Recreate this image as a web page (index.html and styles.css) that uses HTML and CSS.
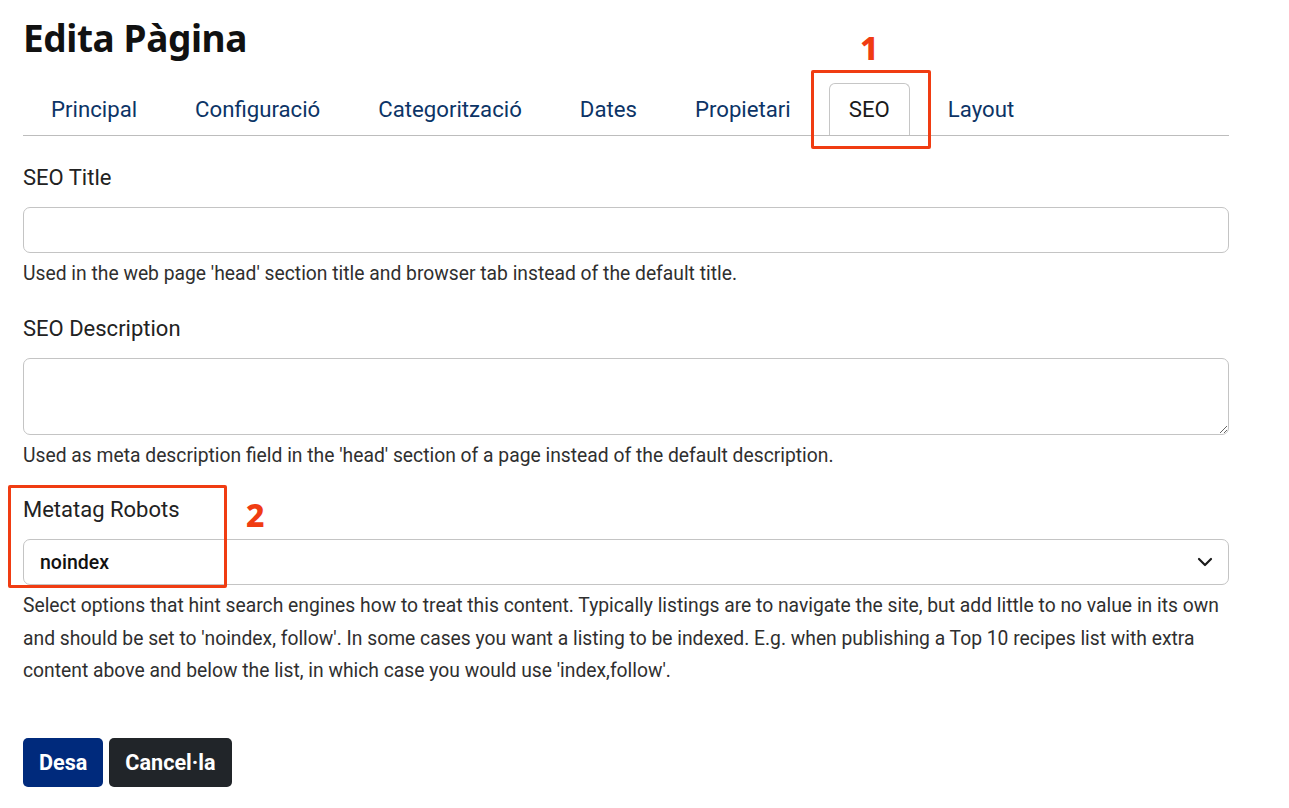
FILE: index.html
```html
<!DOCTYPE html>
<html lang="ca">

<head>
    <meta charset="UTF-8">
    <meta name="viewport" content="width=device-width, initial-scale=1.0">
    <title>Edita Pàgina</title>

    <link rel="stylesheet" href="styles.css">
</head>

<body>
    <div class="main">
        <h1 class="title">Edita Pàgina</h1>

        <ul class="tabs">
            <li class="tab">Principal</li>
            <li class="tab">Configuració</li>
            <li class="tab">Categorització</li>
            <li class="tab">Dates</li>
            <li class="tab">Propietari</li>
            <li class="tab active">SEO</li>
            <li class="tab">Layout</li>
        </ul>

        <form class="form">
            <div class="field">
                <label class="label" for="seotitle">SEO Title</label>
                <input class="input" type="text" id="seotitle">
                <div class="help">Used in the web page 'head' section title and browser tab instead of the default title.</div>
            </div>

            <div class="field">
                <label class="label" for="seodesc">SEO Description</label>
                <textarea class="input area" id="seodesc"></textarea>
                <div class="help">Used as meta description field in the 'head' section of a page instead of the default description.</div>
            </div>

            <div class="field">
                <label class="label" for="robots">Metatag Robots</label>
                <div class="select">
                    <span>noindex</span>
                    <svg class="chevron" width="16" height="16" viewBox="0 0 16 16">
                        <path d="M2 5l6 6 6-6" fill="none" stroke="#1b1b1b" stroke-width="2.2" stroke-linecap="round" stroke-linejoin="round" />
                    </svg>
                </div>
                <div class="help">Select options that hint search engines how to treat this content. Typically listings are to navigate the site, but add little to no value in its own and should be set to 'noindex, follow'. In some cases you want a listing to be indexed. E.g. when publishing a Top 10 recipes list with extra content above and below the list, in which case you would use 'index,follow'.</div>
            </div>

            <div class="buttons">
                <button class="btn save" type="button">Desa</button>
                <button class="btn cancel" type="button">Cancel·la</button>
            </div>
        </form>

        <!-- annotations -->
        <div class="mark mark1"></div>
        <span class="num num1">1</span>
        <div class="mark mark2"></div>
        <span class="num num2">2</span>
    </div>
</body>

</html>
```

FILE: styles.css
```css
body {
    margin: 0;
    background-color: #ffffff;
    font-family: Roboto, "Liberation Sans", sans-serif;
    color: #212529;
}

.main {
    position: relative;
    width: 1206px;
    margin-left: 23px;
}

.title {
    font-family: "Noto Sans", "Open Sans", sans-serif;
    font-size: 37px;
    font-weight: 700;
    line-height: 45px;
    margin: 0;
    padding-top: 15px;
    color: #111111;
    letter-spacing: -0.4px;
}

.tabs {
    display: flex;
    gap: 18px;
    list-style: none;
    margin: 23px 0 0 0;
    padding: 0 0 0 8px;
    border-bottom: 1px solid #bdbdbd;
}

.tab {
    font-size: 22.2px;
    line-height: 28px;
    padding: 11px 19px 12px;
    color: #0c3466;
    border: 1px solid transparent;
    border-bottom: none;
    border-radius: 6px 6px 0 0;
    cursor: pointer;
}

.tab.active {
    color: #1a1a1a;
    border-color: #c6c6c6;
}

.form {
    margin-top: 26px;
}

.field {
    margin-bottom: 22px;
}

.label {
    display: block;
    font-size: 22px;
    line-height: 31px;
    margin-bottom: 14px;
    color: #222222;
}

.input {
    display: block;
    box-sizing: border-box;
    width: 100%;
    height: 46px;
    border: 1px solid #c4c4c4;
    border-radius: 7px;
    padding: 8px 16px;
    font-family: Roboto, sans-serif;
    font-size: 18px;
    background: #fff;
    margin: 0;
}

.area {
    height: 77px;
    resize: vertical;
}

.help {
    margin-top: 5px;
    font-size: 19.3px;
    line-height: 32.5px;
    color: #2f2f2f;
}

.select {
    display: flex;
    align-items: center;
    justify-content: space-between;
    box-sizing: border-box;
    height: 46px;
    border: 1px solid #c4c4c4;
    border-radius: 7px;
    padding: 0 16px;
    font-size: 19.5px;
    font-weight: 500;
    color: #111;
}

.chevron {
    margin-right: -1px;
}

.buttons {
    margin-top: 50px;
    display: flex;
    gap: 6px;
}

.btn {
    font-family: Roboto, sans-serif;
    font-size: 21.6px;
    font-weight: 700;
    color: #fff;
    border: none;
    border-radius: 5px;
    height: 49px;
    padding: 0 16px;
    cursor: pointer;
}

.save {
    background-color: #002a7c;
}

.cancel {
    background-color: #212529;
}

.mark {
    position: absolute;
    border: 3px solid #f03c12;
    border-radius: 2px;
}

.mark1 {
    left: 788px;
    top: 70px;
    width: 114px;
    height: 73px;
}

.mark2 {
    left: -15px;
    top: 485px;
    width: 213px;
    height: 97px;
}

.num {
    position: absolute;
    font-family: "Noto Sans", sans-serif;
    font-weight: 800;
    font-size: 32px;
    line-height: 32px;
    color: #f03c12;
}

.num1 {
    left: 837px;
    top: 32px;
}

.num2 {
    left: 223px;
    top: 499px;
}
```
